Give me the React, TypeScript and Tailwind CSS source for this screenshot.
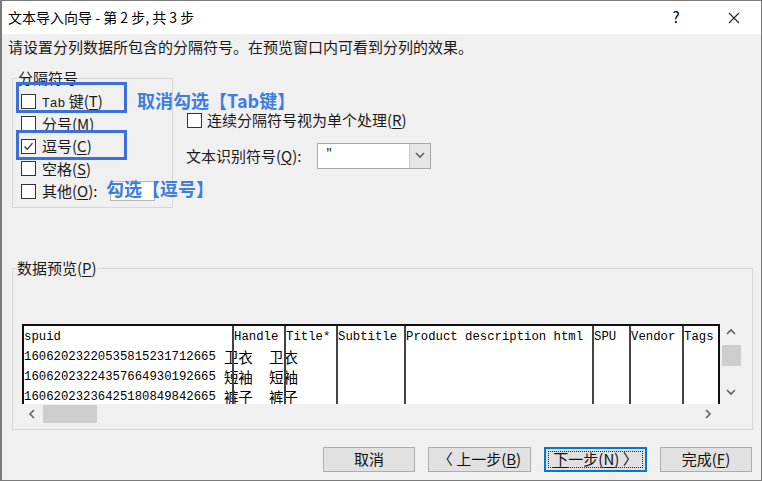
import React from 'react'

const ui = "font-['Noto_Sans_CJK_SC',sans-serif]"
const mono = "font-['Liberation_Mono','Noto_Sans_CJK_SC',monospace]"

function Mn({ c }: { c: string }) {
  return <span className="underline underline-offset-2">{c}</span>
}

function Box({ checked = false }: { checked?: boolean }) {
  return (
    <span className="w-[15px] h-[15px] shrink-0 border border-[#333] bg-white flex items-center justify-center">
      {checked && (
        <svg width="11" height="11" viewBox="0 0 11 11">
          <polyline points="1.5,5.5 4.3,8.3 9.5,2.2" fill="none" stroke="#333" strokeWidth="1.3" />
        </svg>
      )}
    </span>
  )
}

function Chevron({ dir }: { dir: 'left' | 'right' | 'up' | 'down' }) {
  const pts = {
    left: '6,1 2,5 6,9',
    right: '2,1 6,5 2,9',
    up: '1,6 5,2 9,6',
    down: '1,2 5,6 9,2',
  }[dir]
  return (
    <svg width="10" height="10" viewBox="0 0 10 10">
      <polyline points={pts} fill="none" stroke="#606060" strokeWidth="1.6" />
    </svg>
  )
}

const rows = [
  { id: '16062023220535815231712665', name: '卫衣' },
  { id: '16062023224357664930192665', name: '短袖' },
  { id: '16062023236425180849842665', name: '裤子' },
]

const otherCols: { className: string; head: string }[] = [
  { className: 'w-[68px]', head: 'Subtitle' },
  { className: 'w-[188px]', head: 'Product description html' },
  { className: 'w-[37px]', head: 'SPU' },
  { className: 'w-[53px]', head: 'Vendor' },
  { className: 'w-[36px]', head: 'Tags' },
]

function Preview() {
  return (
    <div className="ml-[5px] mt-[48px] grid grid-cols-[698px_21px] grid-rows-[80px_19px]">
      <div className={`flex border-t-2 border-x-2 border-[#111] bg-white overflow-hidden text-[12.3px] text-black ${mono}`}>
        <div className="w-[208px] shrink-0 pt-[1px] whitespace-nowrap">
          <div className="h-[20px] leading-[20px]">spuid</div>
          {rows.map((r) => (
            <div key={r.id} className="h-[20px] leading-[20px] flex items-center">
              <span>{r.id}</span>
              <span className={`ml-[8px] text-[14.5px] leading-[20px] ${ui}`}>{r.name}</span>
            </div>
          ))}
        </div>
        <div className="w-[52px] shrink-0 border-l-2 border-[#444] pt-[1px] whitespace-nowrap">
          <div className="h-[20px] leading-[20px]">Handle</div>
          {rows.map((r) => (
            <div key={r.id} className={`h-[20px] leading-[20px] pl-[35px] text-[14.5px] ${ui}`}>
              {r.name}
            </div>
          ))}
        </div>
        <div className="w-[52px] shrink-0 border-l-2 border-[#444] pt-[1px] whitespace-nowrap">
          <div className="h-[20px] leading-[20px]">Title*</div>
        </div>
        {otherCols.map((c) => (
          <div key={c.head} className={`${c.className} shrink-0 border-l-2 border-[#444] pt-[1px] whitespace-nowrap`}>
            <div className="h-[20px] leading-[20px]">{c.head}</div>
          </div>
        ))}
      </div>
      <div className="flex flex-col items-center pt-[4px] pl-[1px]">
        <Chevron dir="up" />
        <div className="mt-[7px] w-[19px] h-[21px] bg-[#cdcdcd]" />
        <div className="mt-[22px]">
          <Chevron dir="down" />
        </div>
      </div>
      <div className="flex items-center pl-[6px] pr-[6px]">
        <Chevron dir="left" />
        <div className="ml-[5px] w-[54px] h-[18px] bg-[#cdcdcd]" />
        <div className="ml-auto">
          <Chevron dir="right" />
        </div>
      </div>
      <div />
    </div>
  )
}

function Btn({ label, w, focus = false }: { label: React.ReactNode; w: string; focus?: boolean }) {
  return (
    <div
      className={`${w} h-[25px] relative flex items-center justify-center text-[15px] text-[#111] bg-[#e1e1e1] ${
        focus ? 'border-2 border-[#0078d7]' : 'border border-[#adadad]'
      }`}
    >
      {focus && <div className="absolute inset-[2px] border border-dotted border-[#222]" />}
      {label}
    </div>
  )
}

export default function App() {
  return (
    <div className={`relative w-[762px] h-[481px] border border-[#7a7a7a] border-l-2 bg-[#f0f0f0] text-[#1a1a1a] flex flex-col ${ui}`}>
      <div className="h-[33px] bg-white flex items-center pl-[6px] text-[14px] text-black shrink-0">
        <span>文本导入向导 - 第 2 步, 共 3 步</span>
        <div className="ml-auto flex items-center pr-[4px]">
          <span className="w-[46px] text-center text-[15px]">?</span>
          <span className="ml-[12px] w-[46px] flex justify-center">
            <svg width="12" height="12" viewBox="0 0 12 12">
              <path d="M1 1L11 11M11 1L1 11" stroke="#222" strokeWidth="1.1" />
            </svg>
          </span>
        </div>
      </div>

      <p className="mt-[3px] ml-[6px] h-[20px] leading-[20px] text-[15px]">
        请设置分列数据所包含的分隔符号。在预览窗口内可看到分列的效果。
      </p>

      <div className="mt-[13px] flex">
        <fieldset className="ml-[10px] w-[161px] h-[138px] border border-[#d6d6d6] pl-[5px]">
          <legend className="text-[15px] leading-[16px]">分隔符号</legend>
          <div className="mt-[4px] ml-[3px] flex flex-col text-[15px]">
            <label className="h-[22.5px] flex items-center gap-[6px]">
              <Box />
              <span>
                <span className={`text-[13px] ${mono}`}>Tab</span> 键(<Mn c="T" />)
              </span>
            </label>
            <label className="h-[22.5px] flex items-center gap-[6px]">
              <Box />
              <span>分号(<Mn c="M" />)</span>
            </label>
            <label className="h-[22.5px] flex items-center gap-[6px]">
              <Box checked />
              <span>逗号(<Mn c="C" />)</span>
            </label>
            <label className="h-[22.5px] flex items-center gap-[6px]">
              <Box />
              <span>空格(<Mn c="S" />)</span>
            </label>
            <label className="h-[22.5px] flex items-center gap-[6px]">
              <Box />
              <span>其他(<Mn c="O" />):</span>
              <span className="ml-[7px] w-[45px] h-[20px] bg-white border border-[#b5b5b5]" />
            </label>
          </div>
        </fieldset>

        <div className="ml-[13px] flex flex-col text-[15px]">
          <label className="mt-[40px] h-[20px] flex items-center gap-[5px] ml-[1px]">
            <Box />
            <span>连续分隔符号视为单个处理(<Mn c="R" />)</span>
          </label>
          <div className="mt-[13px] flex items-center">
            <span className="w-[131px]">文本识别符号(<Mn c="Q" />):</span>
            <div className="w-[114px] h-[26px] bg-white border border-[#a8a8a8] flex">
              <span className="flex-1 pl-[8px] leading-[18px] text-[13px]">"</span>
              <span className="w-[21px] border-l border-[#c8c8c8] bg-[#e6e6e6] flex items-center justify-center">
                <Chevron dir="down" />
              </span>
            </div>
          </div>
        </div>
      </div>

      <fieldset className="mt-[52px] ml-[10px] w-[741px] h-[170px] border border-[#d6d6d6] pl-[4px] shrink-0">
        <legend className="text-[15px] leading-[16px]">
          数据预览(<Mn c="P" />)
        </legend>
        <Preview />
      </fieldset>

      <div className="mt-[17px] pr-[9px] flex justify-end gap-[13px]">
        <Btn w="w-[92px]" label="取消" />
        <Btn w="w-[103px]" label={<span>〈 上一步(<Mn c="B" />)</span>} />
        <Btn w="w-[103px]" focus label={<span><Mn c="下" />一步(<Mn c="N" />) 〉</span>} />
        <Btn w="w-[92px]" label={<span>完成(<Mn c="F" />)</span>} />
      </div>

      <div className="absolute left-[14px] top-[81px] w-[111px] h-[31px] border-[3px] border-[#3d6fd9]" />
      <div className="absolute left-[14px] top-[129px] w-[111px] h-[30px] border-[3px] border-[#3d6fd9]" />
      <div className="absolute left-[135px] top-[87px] text-[18px] leading-[24px] font-bold text-[#3c7ddf]">
        取消勾选【Tab键】
      </div>
      <div className="absolute left-[104px] top-[175px] text-[18px] leading-[24px] font-bold text-[#3c7ddf]">
        勾选【逗号】
      </div>
    </div>
  )
}
